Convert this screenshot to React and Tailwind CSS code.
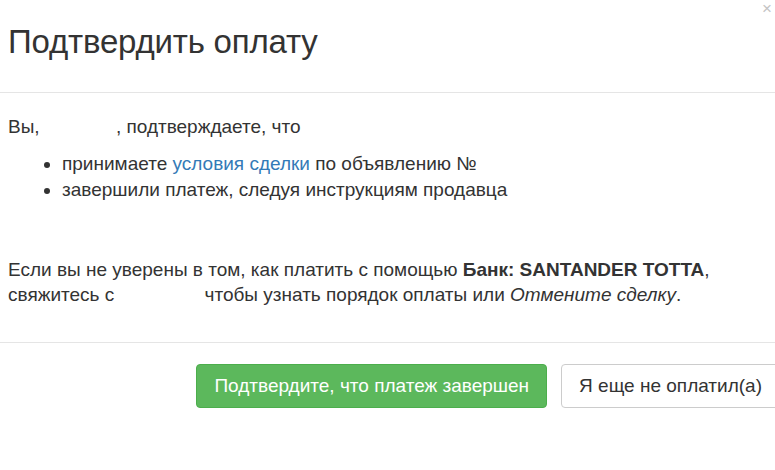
import React from 'react';

function App() {
  return (
    <div className="w-[775px] h-[470px] bg-white overflow-hidden text-[#333] font-['Liberation_Sans',Arial,sans-serif]">
      {/* Header */}
      <div className="relative h-[93px] border-b border-[#e5e5e5] px-2 pt-[22px]">
        <h2 className="text-[33px] leading-[40px] font-normal tracking-[-0.2px]">Подтвердить оплату</h2>
        <span className="absolute right-[3px] top-0 text-[17px] text-[#c4c4c4] leading-none">×</span>
      </div>

      {/* Body */}
      <div className="h-[250px] border-b border-[#e5e5e5] px-2 pt-[21px] text-[19px] leading-[26px]">
        <p>Вы, <span className="inline-block w-[71px]"></span>, подтверждаете, что</p>
        <ul className="list-disc pl-[54px] mt-[11px]">
          <li>принимаете <a className="text-[#337ab7]">условия сделки</a> по объявлению №</li>
          <li>завершили платеж, следуя инструкциям продавца</li>
        </ul>
        <p className="mt-[54px] leading-[25px]">
          Если вы не уверены в том, как платить с помощью <b>Банк: SANTANDER TOTTA</b>,
          <br />
          свяжитесь с <span className="inline-block w-[85px]"></span>чтобы узнать порядок оплаты или <i>Отмените сделку</i>.
        </p>
      </div>

      {/* Footer */}
      <div className="flex justify-end gap-[14px] pt-[21px] mr-[-5px]">
        <button className="h-[44px] px-[17px] rounded-[4px] bg-[#5cb85c] border border-[#4cae4c] text-white text-[19px]">
          Подтвердите, что платеж завершен
        </button>
        <button className="h-[44px] px-[17px] rounded-[4px] bg-white border border-[#ccc] text-[#333] text-[19px]">
          Я еще не оплатил(а)
        </button>
      </div>
    </div>
  );
}

export default App;
